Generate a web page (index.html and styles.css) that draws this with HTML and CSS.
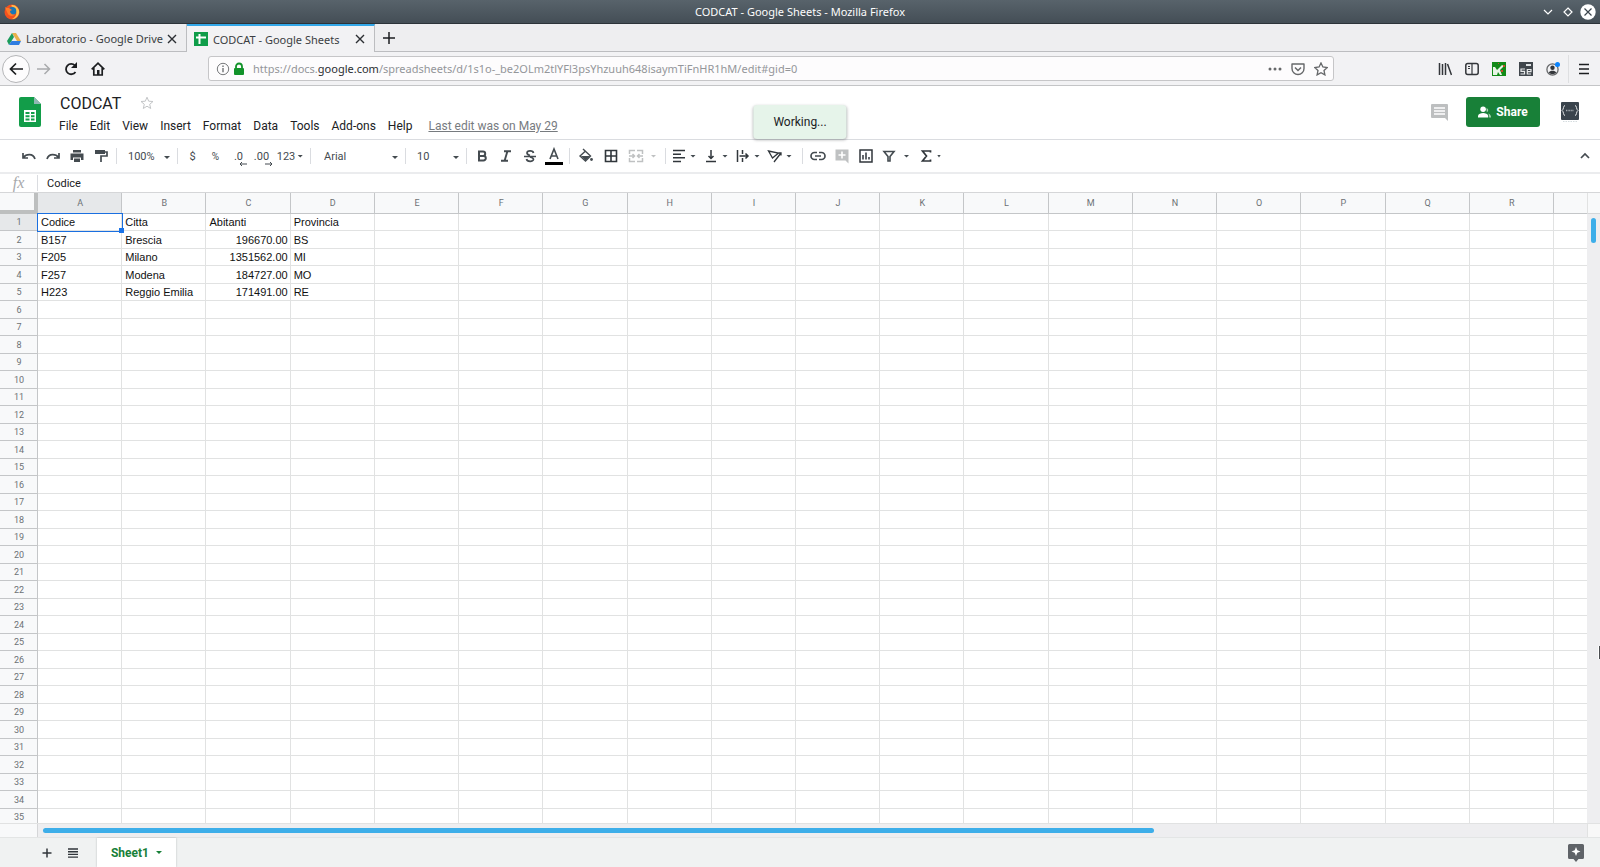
FILE: index.html
```html
<!DOCTYPE html>
<html lang="en">
<head>
<meta charset="utf-8">
<title>CODCAT - Google Sheets - Mozilla Firefox</title>
<link rel="stylesheet" href="styles.css">
</head>
<body>
<div class="window">
  <header class="titlebar">
    <svg class="fx-logo" viewBox="0 0 16 16"><circle cx="8" cy="8" r="7.5" fill="#f4511e"/><path d="M8 1a7 7 0 0 1 7 8c-1 4-4 6-7 6 4-2 5-5 4-8C11 4 9 3 7 2z" fill="#ffc04d"/><circle cx="8.3" cy="7" r="4" fill="#1976b8"/><path d="M1 3c1 1 3 1 4 1l3 2-2 1c0 3 3 4 5 3-2 3-6 2-7 0C3 8 2 6 1 3z" fill="#ff7b29"/></svg>
    <h1 class="titlebar-text">CODCAT - Google Sheets - Mozilla Firefox</h1>
    <div class="window-buttons">
      <button aria-label="Minimize"><svg viewBox="0 0 16 16"><path d="M4 6l4 4 4-4" fill="none" stroke="#fff" stroke-width="1.2"/></svg></button>
      <button aria-label="Restore"><svg viewBox="0 0 16 16"><path d="M8 4l4 4-4 4-4-4z" fill="none" stroke="#fff" stroke-width="1.2"/></svg></button>
      <button aria-label="Close window"><svg viewBox="0 0 16 16"><circle cx="8" cy="8" r="7.7" fill="#fff"/><path d="M4.500 4.500l7 7m0-7l-7 7" stroke="#3b454d" stroke-width="1.200"/></svg></button>
    </div>
  </header>

  <nav class="tabs" aria-label="Browser tabs">
    <div class="tab">
      <svg class="tab-icon" viewBox="0 0 14 14"><path d="M5 1h4l5 8h-4z" fill="#e8b04a"/><path d="M5 1l2 4-5 8-2-4z" fill="#1b9c5a"/><path d="M4.500 9H14l-2 4H2z" fill="#2f7de1"/></svg>
      <span class="tab-label">Laboratorio - Google Drive</span>
      <button class="tab-close" aria-label="Close tab"><svg viewBox="0 0 10 10"><path d="M1 1l8 8m0-8L1 9" stroke="#2c2f33" stroke-width="1.400"/></svg></button>
    </div>
    <div class="tab tab-active">
      <svg class="tab-icon" viewBox="0 0 14 14"><path d="M0 0h14v14H0z" fill="#0f9d49"/><path d="M2 5.500h10M5.500 2v10" stroke="#fff" stroke-width="2"/></svg>
      <span class="tab-label">CODCAT - Google Sheets</span>
      <button class="tab-close" aria-label="Close tab"><svg viewBox="0 0 10 10"><path d="M1 1l8 8m0-8L1 9" stroke="#2c2f33" stroke-width="1.400"/></svg></button>
    </div>
    <button class="tab-new" aria-label="New tab"><svg viewBox="0 0 12 12"><path d="M6 0v12M0 6h12" stroke="#1c1e20" stroke-width="1.500"/></svg></button>
  </nav>

  <div class="navbar">
    <button class="nav-back" aria-label="Back"><svg viewBox="0 0 14 14"><path d="M14 7H1.500M7 1.500L1.500 7 7 12.500" fill="none" stroke="#1c1e20" stroke-width="1.700"/></svg></button>
    <button class="nav-button" aria-label="Forward"><svg viewBox="0 0 14 14"><path d="M0 7h12.500M7.500 2l5 5-5 5" fill="none" stroke="#a9abad" stroke-width="1.500"/></svg></button>
    <button class="nav-button" aria-label="Reload"><svg viewBox="0 0 14 14"><path d="M11.500 10A5.200 5.200 0 1 1 11 3.500" fill="none" stroke="#1c1e20" stroke-width="1.800"/><path d="M13 0v6H7z" fill="#1c1e20"/></svg></button>
    <button class="nav-button" aria-label="Home"><svg viewBox="0 0 14 14"><path d="M.7 7.300L7 1.200l6.300 6.100M2.800 6v7h8.400V6" fill="none" stroke="#1c1e20" stroke-width="1.700"/><path d="M6 8h2.500v5H6z" fill="#1c1e20"/></svg></button>
    <div class="urlbar">
      <svg class="url-info" viewBox="0 0 14 14"><circle cx="7" cy="7" r="5.700" fill="none" stroke="#77797b"/><path d="M7 6v4.300M7 3.500v1.400" stroke="#66686a" stroke-width="1.300"/></svg>
      <svg class="url-lock" viewBox="0 0 12 14"><path d="M3 7V4.500a3 3 0 0 1 6 0V7" fill="none" stroke="#12932a" stroke-width="1.800"/><rect x="1" y="6" width="10" height="7" rx="1" fill="#12932a"/></svg>
      <p class="url-text">https://docs.<b>google.com</b>/spreadsheets/d/1s1o-_be2OLm2tlYFl3psYhzuuh648isaymTiFnHR1hM/edit#gid=0</p>
      <button aria-label="Page actions"><svg viewBox="0 0 14 14"><g fill="#66686a"><circle cx="2" cy="7" r="1.500"/><circle cx="7" cy="7" r="1.500"/><circle cx="12" cy="7" r="1.500"/></g></svg></button>
      <button aria-label="Save to Pocket"><svg viewBox="0 0 14 14"><path d="M1 2h12v4.500a6 6 0 0 1-12 0z" fill="none" stroke="#66686a" stroke-width="1.400" stroke-linejoin="round"/><path d="M4 5.500l3 3 3-3" fill="none" stroke="#66686a" stroke-width="1.500"/></svg></button>
      <button aria-label="Bookmark"><svg viewBox="0 0 14 14"><path d="M7 .9l1.900 4.100 4.300.5-3.200 3 .9 4.400L7 10.700l-3.900 2.200.9-4.400-3.200-3 4.300-.5z" fill="none" stroke="#66686a" stroke-width="1.300"/></svg></button>
    </div>
    <div class="nav-tools">
      <button aria-label="Library"><svg viewBox="0 0 14 14"><path d="M1.500 1v12M4.500 2v11M7.500 1v12M9.500 2l4 11" stroke="#33363a" stroke-width="1.500"/></svg></button>
      <button aria-label="Sidebars"><svg viewBox="0 0 14 14"><rect x=".8" y="1.500" width="12.400" height="11" rx="2" fill="none" stroke="#33363a" stroke-width="1.500"/><path d="M7 2v10M3 4.500h2M3 6.500h2" stroke="#33363a" stroke-width="1.200"/></svg></button>
      <button aria-label="Katalon Recorder"><svg viewBox="0 0 14 14"><path d="M0 0h14v14H0z" fill="#128a18"/><path d="M1 5h2l2 3 5-5 2 1-4 4 2 5H8l-2-3-1 3H1z" fill="#e9f5e6"/><path d="M11 3h2v2h-2zM9 8h2v2H9zM6 1h1v1H6z" fill="#c94a2c"/></svg></button>
      <button aria-label="Selenium IDE"><svg viewBox="0 0 14 14"><path d="M0 0h14v14H0z" fill="#40464c"/><path d="M7 2h5v2H7z" fill="#dfe2e4"/><path d="M6 7H2v2.300h3.500V12H1.500M8 9.700h4V7.500H8.300V12H12" fill="none" stroke="#e8eaeb" stroke-width="1.200"/></svg></button>
      <button aria-label="Account"><svg viewBox="0 0 14 14"><circle cx="6.500" cy="7.500" r="5.600" fill="none" stroke="#66686a" stroke-width="1.300"/><circle cx="6.500" cy="5.800" r="2.200" fill="#33363a"/><path d="M2.800 10.500c1-2.500 6.400-2.500 7.400 0-2 2.200-5.400 2.200-7.400 0z" fill="#33363a"/><circle cx="11.500" cy="2.500" r="2.500" fill="#0a84ff"/></svg></button>
      <button class="nav-menu" aria-label="Menu"><svg viewBox="0 0 14 14"><path d="M2 2.500h10M2 7h10M2 11.500h10" stroke="#1c1e20" stroke-width="1.500"/></svg></button>
    </div>
  </div>

  <header class="doc-header">
    <svg class="sheets-logo" viewBox="0 0 22 30"><path d="M2 0h13l7 7v21a2 2 0 0 1-2 2H2a2 2 0 0 1-2-2V2a2 2 0 0 1 2-2z" fill="#129d49"/><path d="M15 0l7 7h-7z" fill="#8fb7b3"/><path d="M5 13h12v12H5z" fill="#fff"/><path d="M6.500 15h4v2h-4zm5.500 0h3.500v2H12zm-5.500 3.300h4v2h-4zm5.500 0h3.500v2H12zm-5.500 3.300h4v2h-4zm5.500 0h3.500v2H12z" fill="#129d49"/></svg>
    <div class="doc-main">
      <div class="doc-title-row">
        <input class="doc-title" type="text" value="CODCAT" aria-label="Document title">
        <button class="doc-star" aria-label="Star"><svg viewBox="0 0 14 14"><path d="M7 1.200l1.700 4 4.300.3-3.300 2.800 1 4.200L7 10.200l-3.700 2.300 1-4.200L1 5.500l4.300-.3z" fill="none" stroke="#c3c5c7"/></svg></button>
      </div>
      <div class="menu-row">
        <button>File</button><button>Edit</button><button>View</button><button>Insert</button><button>Format</button><button>Data</button><button>Tools</button><button>Add-ons</button><button>Help</button>
        <a class="last-edit" href="#">Last edit was on May 29</a>
      </div>
    </div>
    <div class="doc-actions">
      <button class="comments" aria-label="Open comment history"><svg viewBox="0 0 17 17"><path d="M1 0h15a1 1 0 0 1 1 1v16l-3-3H1a1 1 0 0 1-1-1V1a1 1 0 0 1 1-1z" fill="#bdbfc0"/><path d="M3 4h11M3 7h11M3 10h11" stroke="#fff" stroke-width="1.500"/></svg></button>
      <button class="share"><svg viewBox="0 0 14 12"><circle cx="5.500" cy="3" r="3" fill="#fff"/><path d="M0 12V10c1-4 10-4 11 0v2z" fill="#fff"/><path d="M9 2c2 0 3 3 .5 4.200M11 7.500c2 .5 3 2 3 4.500h-2c0-2 0-3-1-4.500z" fill="#a9d3b2"/></svg>Share</button>
      <button class="avatar" aria-label="Google Account"><svg viewBox="0 0 20 22"><rect x="1" y="1" width="18" height="18" rx="1" fill="#39434c"/><path d="M5 4.500c-2 0-1 4-3 5 2 1 1 5 3 5M15 4.500c2 0 1 4 3 5-2 1-1 5-3 5" fill="none" stroke="#e4e7e9"/><path d="M6 9.500h8" stroke="#a6adb2" stroke-width="1.500" stroke-dasharray="1 .6"/><path d="M3 20.500h14" stroke="#d5dcdf" stroke-dasharray="1.500 1"/></svg></button>
    </div>
    <div class="toast" role="status">Working...</div>
  </header>

  <div class="toolbar" role="toolbar" aria-label="Formatting">
    <button class="tool" aria-label="Undo"><svg viewBox="0 0 16 16"><path d="M2 5v5h5M2.500 9.500C5 6 12 5 14 11" fill="none" stroke="#444b50" stroke-width="1.700"/></svg></button>
    <button class="tool" aria-label="Redo"><svg viewBox="0 0 16 16"><path d="M14 5v5H9M13.500 9.500C11 6 4 5 2 11" fill="none" stroke="#444b50" stroke-width="1.700"/></svg></button>
    <button class="tool" aria-label="Print"><svg viewBox="0 0 16 16"><path d="M4 2h8v2.500H4zM1.500 5.500h13V12H12V9.500H4V12H1.500zM5 10.500h6V14H5z" fill="#444b50"/></svg></button>
    <button class="tool" aria-label="Paint format"><svg viewBox="0 0 16 16"><path d="M2 2h10v4H2z" fill="#444b50"/><path d="M12 4h2v4H8v6" fill="none" stroke="#444b50" stroke-width="1.700"/></svg></button>
    <span class="separator"></span>
    <span class="pick pick-zoom"><select aria-label="Zoom"><option>100%</option></select></span>
    <span class="separator"></span>
    <button class="tool tool-text">$</button>
    <button class="tool tool-text tool-percent">%</button>
    <button class="tool tool-text" aria-label="Decrease decimal places"><span class="decimal">.0<svg viewBox="0 0 8 4"><path d="M8 2H1.500M3 0L1 2l2 2" fill="none" stroke="#444b50"/></svg></span></button>
    <button class="tool tool-text" aria-label="Increase decimal places"><span class="decimal">.00<svg viewBox="0 0 8 4"><path d="M0 2h6.500M5 0l2 2-2 2" fill="none" stroke="#444b50"/></svg></span></button>
    <button class="tool-format">123<i class="caret"></i></button>
    <span class="separator"></span>
    <span class="pick pick-font"><select aria-label="Font"><option>Arial</option></select></span>
    <span class="separator"></span>
    <span class="pick pick-size"><select aria-label="Font size"><option>10</option></select></span>
    <span class="separator"></span>
    <button class="tool" aria-label="Bold"><svg viewBox="0 0 16 16"><path d="M5 3.500h4a2.200 2.200 0 0 1 0 4.400H5zm0 4.400h4.500a2.300 2.300 0 0 1 0 4.600H5z" fill="none" stroke="#444b50" stroke-width="2"/></svg></button>
    <button class="tool" aria-label="Italic"><svg viewBox="0 0 16 16"><path d="M6 3.300h7M3 12.700h7M9.500 3L6.500 13" stroke="#444b50" stroke-width="1.900"/></svg></button>
    <button class="tool" aria-label="Strikethrough"><svg viewBox="0 0 16 16"><path d="M2 8.500h12" stroke="#444b50" stroke-width="1.500"/><path d="M11.500 5C11 2 5 2.200 5 5c0 1.500 1.500 2 3 2.500M8 9c2 .5 3.500 1 3.500 2.300C11.500 14 5 14 4.500 11" fill="none" stroke="#444b50" stroke-width="1.700"/></svg></button>
    <button class="tool tool-color" aria-label="Text color"><svg viewBox="0 0 18 18"><path d="M5 12L9 2l4 10M6.500 9h5" fill="none" stroke="#444b50" stroke-width="1.600"/><path d="M0 15h18v3H0z" fill="#000"/></svg></button>
    <span class="separator"></span>
    <button class="tool tool-wide" aria-label="Fill color"><svg viewBox="0 0 16 16"><path d="M5 1l7.500 7-5 5L2 8l5-4.500" fill="none" stroke="#444b50" stroke-width="1.400"/><path d="M3 8h9l-4.500 4.500z" fill="#444b50"/><circle cx="13.500" cy="11.500" r="1.400" fill="#444b50"/></svg></button>
    <button class="tool tool-wide" aria-label="Borders"><svg viewBox="0 0 16 16"><path d="M2.500 2.500h11v11h-11zM8 2.500v11M2.500 8h11" fill="none" stroke="#30363b" stroke-width="1.600"/></svg></button>
    <button class="tool tool-wide" aria-label="Merge cells"><svg viewBox="0 0 16 16"><path d="M1.500 6V2.500H7M9 2.500h5.500V6M1.500 10v3.500H7M9 13.500h5.500V10M1 8h5M15 8h-5M4.500 6L6.500 8l-2 2M11.500 6l-2 2 2 2" fill="none" stroke="#bfc1c2" stroke-width="1.500"/></svg></button>
    <button class="tool-caret caret-off" aria-label="Merge type"><i class="caret"></i></button>
    <span class="separator"></span>
    <button class="tool-menu" aria-label="Horizontal align"><svg viewBox="0 0 16 16"><path d="M2 2.500h12M2 6.200h8M2 9.800h12M2 13.500h8" stroke="#30363b" stroke-width="1.500"/></svg><i class="caret"></i></button>
    <button class="tool-menu" aria-label="Vertical align"><svg viewBox="0 0 16 16"><path d="M3 13.500h10M8 2v8M5.500 8L8 10.500 10.500 8" fill="none" stroke="#30363b" stroke-width="1.500"/></svg><i class="caret"></i></button>
    <button class="tool-menu" aria-label="Text wrapping"><svg viewBox="0 0 16 16"><path d="M2.500 2v12M7.500 2v4M7.500 10v4M4.500 8H13M10.500 5.500L13 8l-2.500 2.500" fill="none" stroke="#30363b" stroke-width="1.500"/></svg><i class="caret"></i></button>
    <button class="tool-menu" aria-label="Text rotation"><svg viewBox="0 0 16 16"><path d="M1.500 3l10 2-6 5zM7 14l7-9M11.500 5H14v2.500" fill="none" stroke="#30363b" stroke-width="1.300"/></svg><i class="caret"></i></button>
    <span class="separator separator-gap"></span>
    <button class="tool" aria-label="Insert link"><svg viewBox="0 0 16 16"><path d="M7 4.500H4.500a3.500 3.500 0 0 0 0 7H7M9 4.500h2.500a3.500 3.500 0 0 1 0 7H9M5 8h6" fill="none" stroke="#444b50" stroke-width="1.700"/></svg></button>
    <button class="tool" aria-label="Insert comment"><svg viewBox="0 0 16 16"><path d="M1.500 1.500h13v14l-3-3h-10z" fill="#bfc1c2"/><path d="M8 3.500v7M4.500 7h7" stroke="#fff" stroke-width="1.600"/></svg></button>
    <button class="tool" aria-label="Insert chart"><svg viewBox="0 0 16 16"><path d="M2 2h12v12H2z" fill="none" stroke="#30363b" stroke-width="1.500"/><path d="M5 7v4.500M8 4.500v7M11 9v2.500" stroke="#30363b" stroke-width="1.500"/></svg></button>
    <button class="tool-menu tool-menu-wide" aria-label="Create a filter"><svg viewBox="0 0 16 16"><path d="M3 3.500h10L9 8.500V13H7V8.500z" fill="none" stroke="#444b50" stroke-width="1.600"/></svg><i class="caret"></i></button>
    <button class="tool-menu" aria-label="Functions"><svg viewBox="0 0 16 16"><path d="M12.500 4.500V3h-8L8.500 8l-4 5h8v-1.500" fill="none" stroke="#30363b" stroke-width="1.700"/></svg><i class="caret caret-small"></i></button>
    <button class="tool collapse" aria-label="Hide the menus"><svg viewBox="0 0 16 16"><path d="M4 10l4-4 4 4" fill="none" stroke="#444b50" stroke-width="1.700"/></svg></button>
  </div>

  <div class="formula">
    <label class="fx" for="formula-input">fx</label>
    <input id="formula-input" class="formula-input" type="text" value="Codice">
  </div>

  <main class="sheet">
    <div class="grid">
      <table class="cells">
        <colgroup><col class="col-index"><col><col><col><col><col><col><col><col><col><col><col><col><col><col><col><col><col><col><col class="col-last"></colgroup>
        <thead><tr><th class="corner"></th><th class="head-active">A</th><th>B</th><th>C</th><th>D</th><th>E</th><th>F</th><th>G</th><th>H</th><th>I</th><th>J</th><th>K</th><th>L</th><th>M</th><th>N</th><th>O</th><th>P</th><th>Q</th><th>R</th><th></th></tr></thead>
        <tbody id="rows"></tbody>
      </table>
    </div>
    <div class="vscroll"><div class="vscroll-head"></div><div class="vscroll-thumb"></div></div>
    <div class="hscroll"><div class="hscroll-head"></div><div class="hscroll-thumb"></div></div>
    <div class="scroll-corner"></div>
    <span class="pointer"></span>
  </main>

  <footer class="sheetbar">
    <button class="bar-button" aria-label="Add sheet"><svg viewBox="0 0 12 12"><path d="M6 1.500v9M1.500 6h9" stroke="#30363b" stroke-width="1.500"/></svg></button>
    <button class="bar-button" aria-label="All sheets"><svg viewBox="0 0 12 12"><path d="M1 2h10M1 4.700h10M1 7.400h10M1 10.100h10" stroke="#30363b" stroke-width="1.400"/></svg></button>
    <button class="sheet-tab">Sheet1<i class="caret"></i></button>
    <button class="explore" aria-label="Explore"><svg viewBox="0 0 16 18"><path d="M1.500 0h13A1.500 1.500 0 0 1 16 1.500v12a1.500 1.500 0 0 1-1.500 1.500H10.500L8 18l-2.500-3h-4A1.500 1.500 0 0 1 0 13.500v-12A1.500 1.500 0 0 1 1.500 0z" fill="#5f6368"/><path d="M8 3l1.300 3.200L12.500 7.500 9.300 8.800 8 12 6.700 8.800 3.500 7.500l3.200-1.300z" fill="#fff"/></svg></button>
  </footer>
</div>
<script src="script.js"></script>
</body>
</html>
```

FILE: styles.css
```css
* { box-sizing: border-box; }
body { margin: 0; font-family: Roboto, sans-serif; font-size: 12px; color: #202124; background: #fff; }
button, input, select { font: inherit; color: inherit; border: 0; padding: 0; margin: 0; background: none; outline: 0; }
button { display: flex; align-items: center; justify-content: center; flex: none; }
svg { display: block; flex: none; }
.window { display: flex; flex-direction: column; height: 100vh; overflow: hidden; }

.titlebar { display: grid; grid-template-columns: 80px 1fr 80px; align-items: center; height: 24px; flex: none; padding: 0 4px; background: linear-gradient(#58636b, #444e56); border-bottom: 1px solid #2c3339; }
.fx-logo { width: 16px; height: 16px; }
.titlebar-text { margin: 0; text-align: center; font: 400 11px "Noto Sans", sans-serif; color: #fcfcfc; }
.window-buttons { display: flex; justify-content: flex-end; gap: 4px; }
.window-buttons svg { width: 16px; height: 16px; }

.tabs { display: flex; flex: none; height: 28px; background: #eeeef0; border-bottom: 1px solid #bcbdc0; font: 11px "Noto Sans", sans-serif; color: #3b3e42; }
.tab { display: flex; align-items: center; width: 187px; padding: 2px 9px 0 7px; border-right: 1px solid #bcbdc0; }
.tab-active { width: 188px; height: 28px; padding-top: 0; border-top: 2px solid #32a7e8; background: #f2f2f4; }
.tab-icon { width: 14px; height: 14px; margin-right: 5px; }
.tab-label { flex: 1; white-space: nowrap; }
.tab-close svg { width: 10px; height: 10px; }
.tab-new { width: 27px; }
.tab-new svg { width: 12px; height: 12px; }

.navbar { display: flex; align-items: center; flex: none; height: 34px; padding: 0 1px 0 2px; background: #f2f2f4; border-bottom: 1px solid #c4c5c7; }
.nav-back { width: 28px; height: 28px; border: 1px solid #b4b5b7; border-radius: 50%; background: #fdfcfd; }
.nav-button { width: 27px; height: 28px; }
.nav-back svg, .nav-button svg, .nav-tools svg { width: 14px; height: 14px; }
.urlbar { display: flex; align-items: center; flex: 1; height: 25px; margin-left: 97px; padding: 0 1px 0 7px; border: 1px solid #c6c6c8; border-radius: 3px; background: #fdfcfd; }
.url-info { width: 14px; height: 14px; }
.url-lock { width: 12px; height: 14px; margin-left: 3px; }
.url-text { flex: 1; margin: 0 0 0 8px; font: 11px "Noto Sans", sans-serif; color: #94969a; white-space: nowrap; }
.url-text b { font-weight: 400; color: #2b2d30; }
.urlbar button { width: 23px; height: 22px; }
.urlbar svg { flex: none; }
.urlbar button svg { width: 14px; height: 14px; }
.nav-tools { display: flex; align-items: center; margin-left: 97px; }
.nav-tools button { width: 27px; height: 28px; }
.nav-tools .nav-menu { width: 31px; border-left: 1px solid #dedfe1; margin-left: 2px; }

.doc-header { position: relative; display: flex; flex: none; height: 54px; padding: 11px 20px 0 19px; border-bottom: 1px solid #dadce0; }
.sheets-logo { width: 22px; height: 30px; }
.doc-main { flex: 1; margin-left: 13px; }
.doc-title-row { display: flex; align-items: center; height: 20px; margin-top: -4px; }
.doc-title { width: 80px; padding: 0 6px; font: 16px Roboto, sans-serif; }
.doc-star { width: 26px; }
.doc-star svg { width: 14px; height: 14px; }
.menu-row { display: flex; align-items: center; height: 20px; margin: 3px 0 0 -1px; }
.menu-row button { padding: 0 6px; }
.last-edit { margin-left: 10px; color: #777b7f; }
.doc-actions { display: flex; align-items: flex-start; }
.comments { width: 17px; height: 30px; }
.comments svg { width: 17px; height: 17px; }
.share { gap: 5px; width: 74px; height: 30px; margin-left: 18px; border-radius: 3px; background: #188038; color: #fff; font-weight: 700; font-size: 12px; }
.share svg { width: 13px; height: 12px; }
.avatar { height: 30px; margin-left: 20px; }
.avatar svg { width: 20px; height: 22px; }
.toast { position: absolute; top: 19px; left: 50%; transform: translateX(-50%); padding: 0 20px; line-height: 34px; border-radius: 4px; background: #e6f4ea; box-shadow: 0 1px 3px rgba(60, 64, 67, .4); font-size: 12px; z-index: 2; }

.toolbar { display: flex; align-items: center; flex: none; height: 34px; padding: 0 3px 0 17px; border-bottom: 2px solid #ebecee; color: #444b50; font-size: 11px; }
.tool { width: 24px; height: 24px; }
.tool svg, .tool-menu svg { width: 16px; height: 16px; }
.tool-color svg { width: 18px; height: 18px; }
.separator { flex: none; width: 1px; height: 16px; margin: 0 3px; background: #dadce0; }
.separator-gap { margin-left: 5px; }
.caret { flex: none; width: 6px; height: 3px; background: currentColor; clip-path: polygon(0 0, 100% 0, 50% 100%); }
.caret-small { width: 4px; }
.pick { position: relative; display: flex; flex: none; }
.pick::after { content: ""; position: absolute; right: 4px; top: 50%; width: 6px; height: 3px; background: currentColor; clip-path: polygon(0 0, 100% 0, 50% 100%); pointer-events: none; }
.pick select { appearance: none; width: 100%; height: 20px; padding-left: 8px; }
.pick-zoom { width: 54px; }
.pick-font { width: 88px; padding-left: 2px; }
.pick-size { width: 54px; }
.tool-text { width: 23px; }
.tool-percent { font-size: 10px; }
.decimal { position: relative; }
.decimal svg { position: absolute; right: -4px; bottom: -3px; width: 8px; height: 4px; }
.tool-format { width: 34px; gap: 2px; }
.tool-wide { width: 25px; }
.tool-caret { width: 14px; padding-right: 3px; }
.caret-off { color: #bfc1c2; }
.tool-menu { gap: 3px; width: 32px; padding-right: 3px; }
.tool-menu-wide { width: 37px; gap: 7px; }
.collapse { margin-left: auto; }

.formula { display: flex; align-items: center; flex: none; height: 19px; border-bottom: 1px solid #d5d6d8; }
.fx { width: 38px; border-right: 1px solid #dadce0; text-align: center; font: italic 16px/16px "Liberation Serif", serif; color: #a7a9ab; }
.formula-input { flex: 1; padding-left: 9px; font-size: 11px; }

.sheet { position: relative; display: grid; grid-template: minmax(0, 1fr) 14px / minmax(0, 1fr) 13px; flex: 1; min-height: 0; }
.grid { overflow: hidden; }
.cells { width: 100%; table-layout: fixed; border-collapse: separate; border-spacing: 0; }
.col-index { width: 38px; }
.col-last { width: 33px; }
.cells th, .cells td { padding: 0 2px 0 3px; border-right: 1px solid #e1e2e2; border-bottom: 1px solid #e1e2e2; white-space: nowrap; font: 11px/16px "Liberation Sans", Arial, sans-serif; color: #111; text-align: left; }
.cells th { background: #f8f9fa; border-color: #c4c6c8; text-align: center; font: 9px/16px Roboto, sans-serif; color: #6c7175; }
.cells td:last-child, .cells th:last-child { border-right: 0; }
.cells thead th { height: 21px; }
.cells tbody tr { height: 17px; }
.cells tbody tr:nth-child(even) { height: 18px; }
.cells .corner { border-right: 4px solid #bdbfbf; border-bottom: 4px solid #bdbfbf; }
.cells .head-active { background: #e6e8ea; }
.cells .number { text-align: right; }
.cells .selected { position: relative; outline: 1px solid #1a6fe0; outline-offset: 0; }
.cells .selected::after { content: ""; position: absolute; right: -3px; bottom: -3px; width: 5px; height: 5px; background: #1a73e8; }

.vscroll { background: #eeeef0; }
.vscroll-head { height: 21px; background: #f8f9fa; border-bottom: 1px solid #d5d6d8; border-left: 1px solid #e1e2e2; }
.vscroll-thumb { width: 5px; height: 25px; margin: 4px 4px 0; border-radius: 3px; background: #3daee9; }
.hscroll { display: flex; align-items: center; background: #eeeef0; border-top: 1px solid #e1e2e2; }
.hscroll-head { flex: none; width: 38px; height: 100%; background: #f8f9fa; border-right: 1px solid #d5d6d8; }
.hscroll-thumb { width: 70%; height: 5px; margin-left: 5px; border-radius: 3px; background: #3daee9; }
.scroll-corner { background: #f8f8f8; border: 1px solid #e1e2e2; border-width: 1px 0 0 1px; }
.pointer { position: absolute; right: 0; top: 453px; width: 2px; height: 13px; background: #4a4d50; border-left: 1px solid #fff; }

.sheetbar { display: flex; align-items: stretch; flex: none; height: 30px; padding: 0 16px 0 34px; background: #f0f2f2; border-top: 1px solid #e3e5e5; }
.bar-button { width: 26px; }
.bar-button svg { width: 12px; height: 12px; }
.sheet-tab { gap: 7px; width: 79px; margin-left: 11px; background: #fff; box-shadow: 0 0 2px rgba(60, 64, 67, .3); color: #188038; font-size: 12px; font-weight: 700; }
.explore { margin-left: auto; }
.explore svg { width: 16px; height: 18px; }
```

FILE: script.js
```js
const data = [
  ["Codice", "Citta", "Abitanti", "Provincia"],
  ["B157", "Brescia", "196670.00", "BS"],
  ["F205", "Milano", "1351562.00", "MI"],
  ["F257", "Modena", "184727.00", "MO"],
  ["H223", "Reggio Emilia", "171491.00", "RE"]
];
const body = document.getElementById("rows");
for (let r = 0; r < 35; r++) {
  const tr = body.insertRow();
  const head = document.createElement("th");
  head.textContent = r + 1;
  if (r === 0) head.className = "head-active";
  tr.append(head);
  for (let c = 0; c < 19; c++) {
    const td = tr.insertCell();
    td.textContent = (data[r] && data[r][c]) || "";
    if (r > 0 && c === 2) td.className = "number";
    if (r === 0 && c === 0) td.className = "selected";
  }
}
```
